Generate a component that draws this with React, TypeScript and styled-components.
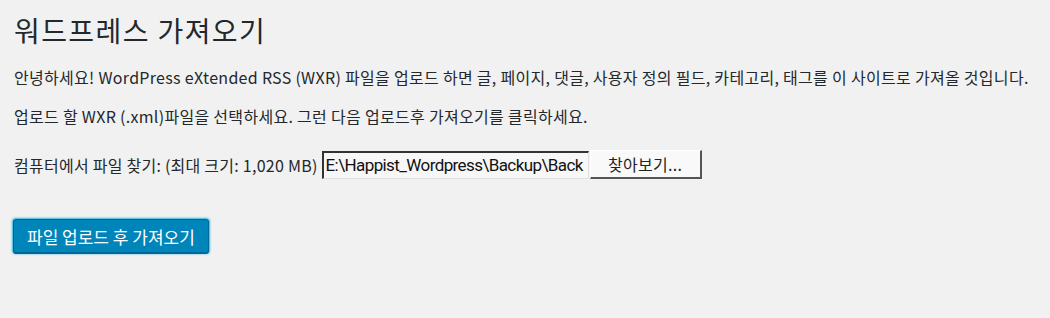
import React from 'react';
import styled, { createGlobalStyle } from 'styled-components';

const GlobalStyle = createGlobalStyle`
  html, body { margin: 0; padding: 0; background: #f1f1f1; }
  body { font-family: "Noto Sans CJK KR", "Noto Sans", sans-serif; color: #23282d; }
`;

const Wrap = styled.div`
  padding: 11px 14px 40px 14px;
`;

const Title = styled.h1`
  margin: 0 0 17px 0;
  font-size: 28px;
  letter-spacing: 1.4px;
  font-weight: 400;
  line-height: 38px;
  color: #23282d;
`;

const Para = styled.p`
  margin: 0 0 16px 0;
  font-size: 16px;
  letter-spacing: 0.3px;
  line-height: 23px;
`;

const UploadRow = styled.div`
  display: flex;
  align-items: center;
  margin-top: 22px;
  font-size: 16px;
`;

const Label = styled.label`
  margin-right: 4px;
  letter-spacing: 0.25px;
`;

const FileField = styled.div`
  width: 261px;
  height: 25px;
  box-sizing: content-box;
  border-top: 2px solid #333;
  border-left: 2px solid #333;
  border-bottom: 1px solid #e0e0e0;
  border-right: 1px solid #e0e0e0;
  background: #f7f7f7;
  padding: 0 1px 0 2px;
  font-family: Roboto, "Noto Sans", sans-serif;
  font-size: 17px;
  letter-spacing: -0.6px;
  line-height: 25px;
  color: #111;
  overflow: hidden;
  white-space: nowrap;
`;

const Browse = styled.button`
  height: 29px;
  width: 112px;
  margin-left: 1px;
  background: #f9f9f9;
  border: none;
  border-right: 2px solid #555;
  border-bottom: 2px solid #555;
  border-top: 1px solid #fff;
  border-left: 1px solid #fff;
  font-family: "Noto Sans CJK KR", sans-serif;
  font-size: 16px;
  letter-spacing: 0.3px;
  color: #222;
  padding: 0;
`;

const Submit = styled.button`
  margin-top: 40px;
  height: 34px;
  padding: 0 13px;
  background: #0085ba;
  border: 1px solid #006799;
  border-radius: 3px;
  color: #fff;
  font-family: "Noto Sans CJK KR", sans-serif;
  font-size: 17px;
  box-shadow: 0 1px 0 #006799, 0 0 2px 1px #33b3db;
  margin-left: -1px;
`;

export default function App() {
  return (
    <Wrap>
      <GlobalStyle />
      <Title>워드프레스 가져오기</Title>
      <Para>
        안녕하세요! WordPress eXtended RSS (WXR) 파일을 업로드 하면 글, 페이지, 댓글, 사용자 정의 필드, 카테고리, 태그를 이 사이트로 가져올 것입니다.
      </Para>
      <Para>업로드 할 WXR (.xml)파일을 선택하세요. 그런 다음 업로드후 가져오기를 클릭하세요.</Para>
      <UploadRow>
        <Label>컴퓨터에서 파일 찾기: (최대 크기: 1,020 MB)</Label>
        <FileField>E:\Happist_Wordpress\Backup\Back</FileField>
        <Browse>찾아보기...</Browse>
      </UploadRow>
      <Submit>파일 업로드 후 가져오기</Submit>
    </Wrap>
  );
}
